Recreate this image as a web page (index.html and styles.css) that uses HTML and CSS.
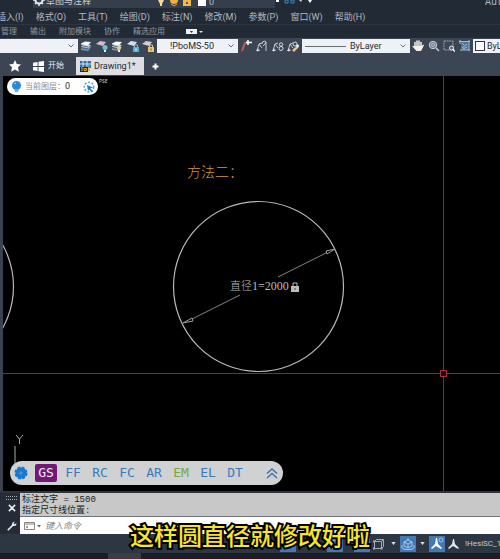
FILE: index.html
```html
<!DOCTYPE html>
<html lang="zh-CN">
<head>
<meta charset="utf-8">
<title>Drawing1</title>
<link rel="stylesheet" href="styles.css">
</head>
<body>
<svg class="defs" aria-hidden="true">
  <symbol id="layers" viewBox="0 0 12 12"><path d="M1 8l4-2 6 1-3 4-7-1z" fill="#7d93b1"/><path d="M1 6l4-2 6 1-3 3-7-1z" fill="#b9c9de"/><path d="M1 3.500l4-2 6 .5-3 3.500-7-1z" fill="#f4f7fb"/><path d="M1 7.800l7 1.200M1 5.800l7 1" stroke="#34404f" stroke-width=".6"/></symbol>
  <symbol id="sheet" viewBox="0 0 12 12"><path d="M0 4l4-3 6 1-3 4z"/></symbol>
  <symbol id="leader" viewBox="0 0 12 12"><path d="M1 11l2-7 3-1M3 4l3 4M1 11l3-1" fill="none" stroke="#c3cad4"/><path d="M0 11l2-3 1 3z" fill="#dfe4ea"/></symbol>
</svg>
<header class="app-head">
  <div class="quick">
    <div class="clip workspace"><svg class="gear" viewBox="0 0 12 12"><circle cx="6" cy="6" r="3.500" fill="none" stroke="#e8ebef" stroke-width="2"/><path d="M6 0v12M0 6h12M2 2l8 8M10 2l-8 8" stroke="#e8ebef" stroke-width="1.500" stroke-dasharray="2.500 7"/></svg><span>草图与注释</span></div>
    <div class="clip layer-state">
      <svg width="55" height="8" viewBox="0 0 55 8"><path d="M4 0h6L8 4v2H6V4z" fill="#f2dc9a"/><circle cx="20" cy="0" r="4" fill="#f1ac40"/><path d="M17 4l3 2 3-2" stroke="#f1ac40" fill="none"/><path d="M29 0h8v6h-8z" fill="#edb84e"/><path d="M32 2h2v2h-2z" fill="#70522c"/><path d="M44 0h8v6h-8z" fill="#fff"/></svg><span>0</span>
    </div>
    <svg class="quick-icons" viewBox="0 0 44 8"><path d="M1 0h3v2H1zM33 0h4l-2 3z" fill="#fff"/><path d="M10 0h3v3h-3zM16 0h3v3h-3z" fill="none" stroke="#388bc5"/><path d="M24 0h3l-1 2z" fill="#ccd2da"/></svg>
    <div class="clip app-name">Auto</div>
  </div>
  <nav class="menu">
    <a href="#">插入(I)</a><a href="#">格式(O)</a><a href="#">工具(T)</a><a href="#">绘图(D)</a><a href="#">标注(N)</a><a href="#">修改(M)</a><a href="#">参数(P)</a><a href="#">窗口(W)</a><a href="#">帮助(H)</a>
  </nav>
  <nav class="ribbon">
    <a href="#">管理</a><a href="#">输出</a><a href="#">附加模块</a><a href="#">协作</a><a href="#">精选应用</a>
    <button class="icon more" aria-label="功能区选项"><svg width="18" height="6" viewBox="0 0 18 6"><path d="M0 0h11v5H0z" fill="#eef1f5"/><path d="M4 2h3L5.500 4z" fill="#222a35"/><path d="M13 2h4l-2 2z" fill="#dfe4ea"/></svg></button>
  </nav>
</header>
<div class="toolbar">
  <span class="combo layer"><select aria-label="图层"><option></option></select><svg class="arrow" viewBox="0 0 6 4"><path d="M.5.5L3 3 5.500.5"/></svg></span>
  <div class="tools layer-tools">
    <button class="icon" aria-label="图层特性"><svg viewBox="0 0 12 12"><use href="#layers"/><path d="M6 10l2 1 3-5" stroke="#4d8ac8" fill="none"/></svg></button>
    <button class="icon" aria-label="关闭图层"><svg viewBox="0 0 12 12"><use href="#sheet" fill="#dab8cf"/><circle cx="9" cy="7.500" r="2.500" fill="#65c7d5"/><path d="M8 10h2v2H8z" fill="#dfeff3"/></svg></button>
    <button class="icon" aria-label="打开图层"><svg viewBox="0 0 12 12"><use href="#layers"/><circle cx="8" cy="8" r="2" fill="#ecd18b"/><path d="M7 10h2v2H7z" fill="#eee"/></svg></button>
    <button class="icon" aria-label="锁定图层"><svg viewBox="0 0 12 12"><use href="#sheet" fill="#d4dfed"/><path d="M6 7h6v5H6z" fill="#58afd2"/><path d="M7.500 7V5h3v2" fill="none" stroke="#78c2dd"/><path d="M8.500 8.500h1v2h-1z" fill="#fff"/></svg></button>
    <button class="icon" aria-label="解锁图层"><svg viewBox="0 0 12 12"><use href="#sheet" fill="#d8c9d8"/><path d="M6 7h6v5H6z" fill="#e9c46d"/><path d="M7.500 7V5h3v2" fill="none" stroke="#e9c46d"/><path d="M8.500 8.500h1v2h-1z" fill="#735929"/></svg></button>
  </div>
  <span class="combo style"><select aria-label="标注样式"><option>!PboMS-50</option></select><svg class="arrow" viewBox="0 0 6 4"><path d="M.5.5L3 3 5.500.5"/></svg></span>
  <div class="tools leader-tools">
    <button class="icon" aria-label="多重引线"><svg viewBox="0 0 12 12"><path d="M1 11l3-8 4-1" stroke="#c35d58" stroke-width="2" fill="none"/><path d="M7 0v5M5 2.500h6" stroke="#fff" stroke-width="1.500"/></svg></button>
    <button class="icon" aria-label="添加引线"><svg viewBox="0 0 12 12"><use href="#leader"/><path d="M6 4q0-3 3-3 2 1 0 3l-2 2M10 2v9" stroke="#c3cad4" fill="none"/></svg></button>
    <button class="icon" aria-label="对齐引线"><svg viewBox="0 0 12 12"><use href="#leader"/><circle cx="9" cy="4.500" r="1.700" fill="none" stroke="#d5dae1"/><circle cx="9" cy="8.500" r="2" fill="none" stroke="#d5dae1"/></svg></button>
    <button class="icon" aria-label="引线样式"><svg viewBox="0 0 12 12"><use href="#leader"/><circle cx="8" cy="4" r="2" fill="none" stroke="#d5dae1"/><path d="M5 10l5-4 1 2-4 4z" fill="#e8c58e"/><path d="M9 6l2-2 1 2-1 2z" fill="#fff"/></svg></button>
  </div>
  <span class="combo line"><i class="sample"></i><select aria-label="线型"><option>ByLayer</option></select><svg class="arrow" viewBox="0 0 6 4"><path d="M.5.5L3 3 5.500.5"/></svg></span>
  <div class="tools view-tools">
    <button class="icon" aria-label="平移"><svg viewBox="0 0 12 12"><path d="M3 7V2.500M5 6V1M7 6V1M9 7V2.500" stroke="#f5f2ea" stroke-width="1.500" stroke-linecap="round"/><path d="M2.300 6h7.500l1.200-1.500 1 .7L9 11H4.500L.3 6.500l.8-.8L3 7z" fill="#f5f2ea"/></svg></button>
    <button class="icon" aria-label="缩放"><svg viewBox="0 0 12 12"><circle cx="5" cy="5" r="3.700" fill="#738091" stroke="#c9cfd7"/><circle cx="5" cy="5" r="1.500" fill="none" stroke="#c9cfd7" stroke-width=".8"/><path d="M8 8l3 3" stroke="#c9cfd7" stroke-width="1.500"/></svg></button>
    <button class="icon" aria-label="窗口缩放"><svg viewBox="0 0 12 12"><path d="M1 1h9v9H1z" fill="none" stroke="#9da7b4" stroke-dasharray="2 .7"/><circle cx="8.500" cy="8" r="2" fill="#526071" stroke="#eef1f5"/><path d="M10 9.500l2 2" stroke="#fff" stroke-width="1.500"/></svg></button>
    <button class="icon" aria-label="范围缩放"><svg viewBox="0 0 12 12"><path d="M2 2h8v8H2z" fill="#497696"/><path d="M1 0v4M0 1.500h11M10 0v11M1 10h10M3 8l5-4M3 3l2 2M4 9l4-2" stroke="#a5bdd0" fill="none"/></svg></button>
  </div>
  <span class="combo color"><i class="swatch"></i><select aria-label="颜色"><option>ByLayer</option></select></span>
</div>
<div class="file-tabs">
  <button class="icon star" aria-label="收藏"><svg viewBox="0 0 12 12"><path d="M6 0l1.800 3.900 4.200.5L9 7.300l.8 4.400L6 9.500l-3.800 2.200L3 7.300 0 4.400l4.200-.5z" fill="#fff"/></svg></button>
  <button class="start"><svg viewBox="0 0 12 12" width="11" height="11"><path d="M0 2l5-1v4.500H0zM6 .8L12 0v5.500H6zM0 6.500h5V11l-5-1zM6 6.500h6V12l-6-.9z" fill="#fff"/></svg>开始</button>
  <button class="file"><svg viewBox="0 0 12 12" width="12" height="12"><path d="M0 1h11v7H0z" fill="#2d70a8"/><path d="M3 0v8M7 0v8M0 4h11" stroke="#d8e4ee"/><path d="M0 7h8v5H0z" fill="#172b42"/><path d="M1 8l1-.5V11M4 8.500h2.500v2H4zM9 5v6M8 9l2 2" stroke="#dfa632" fill="none"/></svg>Drawing1*</button>
  <button class="icon plus" aria-label="新建"><svg viewBox="0 0 7 7"><path d="M3.500.5v6M.5 3.500h6" stroke="#fff" stroke-width="2"/></svg></button>
</div>
<main class="canvas">
  <svg class="drawing" width="497" height="415" viewBox="3 76 497 415">
    <g fill="none" stroke="#b9b9b9" stroke-width="1.200">
      <circle cx="258.500" cy="286.500" r="85"/>
      <circle cx="-71.500" cy="286.500" r="85"/>
    </g>
    <g fill="none" stroke="#858585">
      <path d="M278 277l48-24M240 295l-48 24"/>
      <path d="M335 249l-9 2 1 3zM183 323l9-5 1 3z" stroke="#a0a0a0"/>
      <path d="M15 446v37M16 435l3.500 4 3.500-4M19.500 439v5" stroke="#aaa"/>
    </g>
    <path d="M443.500 76v415M3 373.500h497" stroke="#9c1f26"/>
    <path d="M440.500 370.500h6v6h-6z" fill="#250307" stroke="#a8393f"/>
    <text class="heading" x="187" y="177">方法二：</text>
    <text class="dimension" x="230" y="290">直径<tspan class="num">1=2000</tspan></text>
    <path d="M291 286h8v6h-8z" fill="#bcbcbc"/><path d="M293 286v-3h4v3" fill="none" stroke="#bcbcbc"/><path d="M294.500 288h1v2h-1z" fill="#444"/>
    <text class="pse" x="99" y="83">PSE</text>
  </svg>
  <div class="layer-pill"><svg width="11" height="12" viewBox="0 0 11 12"><circle cx="5.500" cy="4.500" r="4.500" fill="#2388df"/><path d="M3 8h5l-1 3H4z" fill="#65afe9"/><path d="M3 3l2-1" stroke="#a8d7ff"/></svg><span>当前图层：<b>0</b></span><button class="icon pick" aria-label="拾取"><svg viewBox="0 0 12 12"><circle cx="6" cy="6" r="4.800" fill="none" stroke="#4898d8" stroke-width="1.300" stroke-dasharray="2 1.500"/><path d="M4 4l6 2.500-2.500 1 2.500 3-1 1-2.700-3L5 10z" fill="#217fc9"/></svg></button></div>
  <div class="dock">
    <button class="icon settings" aria-label="设置"><svg viewBox="0 0 14 14"><circle cx="7" cy="7" r="5.500" fill="#1877ce"/><circle cx="7" cy="7" r="5.700" fill="none" stroke="#1877ce" stroke-width="1.600" stroke-dasharray="3 1.480"/><circle cx="7" cy="7" r="1.800" fill="#4492d8"/></svg></button>
    <button class="active">GS</button><button>FF</button><button>RC</button><button>FC</button><button>AR</button><button class="green">EM</button><button>EL</button><button>DT</button>
    <button class="icon fold" aria-label="收起"><svg viewBox="0 0 12 12"><path d="M1 6.500L6 2l5 4.500M1 11l5-4.500L11 11" fill="none" stroke="#4475ad" stroke-width="1.600"/></svg></button>
  </div>
</main>
<section class="command">
  <div class="command-side"><svg width="12" height="4" viewBox="0 0 12 4"><path d="M0 .5h12M0 3.500h12" stroke="#a2a9b3" stroke-dasharray="1 1"/></svg>
    <button class="icon" aria-label="关闭"><svg viewBox="0 0 8 8"><path d="M1.500 1.500l5 5m0-5l-5 5" stroke="#e9ecef" stroke-width="1.300"/></svg></button>
    <button class="icon wrench" aria-label="自定义"><svg viewBox="0 0 12 12"><path d="M1.500 10.500l6-6" stroke="#f2f2f2" stroke-width="2" stroke-linecap="round"/><path d="M9.500 1L7.700 2.800l1.500 1.500L11 2.500Q12 6 8.500 6T6 3.500Q6.300.8 9.500 1z" fill="#f2f2f2"/></svg></button></div>
  <div class="command-main">
    <div class="history"><p>标注文字 = 1500</p><p>指定尺寸线位置:</p></div>
    <div class="entry"><svg width="17" height="10" viewBox="0 0 17 10"><path d="M.5 1.500h10v7H.5zM.5 3h10M2 5l2 1-2 1" fill="none" stroke="#868686"/><path d="M13 4h4l-2 2.500z" fill="#666"/></svg><input aria-label="命令" placeholder="键入命令"></div>
  </div>
</section>
<footer class="status">
  <button class="icon on" aria-label="栅格"><svg viewBox="0 0 16 16"><path d="M3 11h10M8 4v8" stroke="#c6ddf2"/></svg></button>
  <button class="icon on second" aria-label="捕捉"><svg viewBox="0 0 16 16"><path d="M3 4h9v8H3z" fill="none" stroke="#c6ddf2"/></svg></button>
  <button class="icon on third" aria-label="选择循环"><svg viewBox="0 0 16 16"><path d="M3 4h8v6H3z" fill="none" stroke="#9ec1e4"/><path d="M11 8v5h3z" fill="#fff"/></svg></button>
  <button class="icon" aria-label="三维对象捕捉"><svg viewBox="0 0 16 16"><path d="M3.500 5.500h7v7h-7zM3.500 5.500l2-2h7v7l-2 2M10.500 5.500l2-2" fill="none" stroke="#a4adba"/><path d="M2 4.500h2v2H2zM2 11.500h2v2H2zM9.500 11.500h2v2h-2z" fill="#a4adba"/></svg></button>
  <svg class="caret" viewBox="0 0 6 4"><path d="M0 0h6L3 4z"/></svg>
  <button class="icon on" aria-label="动态坐标"><svg viewBox="0 0 16 16"><path d="M4 6l4-2 4 2v4l-4 2-4-2zM4 6l4 2 4-2M8 8v4M2 9v3l3 1.500h6l3-1.500V9M8 2v2" fill="none" stroke="#a5caed"/></svg></button>
  <svg class="caret" viewBox="0 0 6 4"><path d="M0 0h6L3 4z"/></svg>
  <button class="icon on" aria-label="注释可见性"><svg viewBox="0 0 16 16"><path d="M7 2h1l1 6 4 4-1 1-5-3-4 3-1-1 4-4z" fill="#fff"/><circle cx="12" cy="4" r="2" fill="none" stroke="#9dc6eb"/></svg></button>
  <button class="icon" aria-label="自动缩放"><svg viewBox="0 0 16 16"><path d="M7 3h1l1 5 4 4-1 1-5-3-4 3-1-1 4-4z" fill="#e2e5e9"/></svg></button>
  <button class="scale">!HesiSC_1</button>
</footer>
<div class="desk"><i></i></div>
<p class="caption">这样圆直径就修改好啦</p>
</body>
</html>
```
FILE: styles.css
```css
* { box-sizing: border-box; }
body {
  margin: 0;
  height: 100vh;
  overflow: hidden;
  position: relative;
  display: flex;
  flex-direction: column;
  background: #000;
  color: #b2b9c2;
  font: 9px/14px Roboto, "Noto Sans CJK SC", sans-serif;
}
button, input, select { font: inherit; color: inherit; }
button { border: 0; padding: 0; margin: 0; background: none; white-space: nowrap; }
a { color: inherit; text-decoration: none; white-space: nowrap; }
p { margin: 0; }
svg { display: block; flex: none; }
.defs { position: absolute; width: 0; height: 0; }
.icon { width: 12px; height: 12px; flex: none; }
.icon svg { width: 100%; height: 100%; }
.more { width: 18px; height: 6px; }

.app-head { background: #222a35; flex: none; }
.quick { height: 8px; display: flex; align-items: flex-end; overflow: hidden; padding-left: 33px; }
.clip { height: 8px; display: flex; align-items: flex-end; overflow: hidden; line-height: 10px; }
.workspace { width: 121px; background: #343e4c; gap: 1px; color: #cbd0d6; padding-bottom: 2px; }
.gear { width: 12px; height: 12px; }
.layer-state { width: 121px; background: #343e4c; }
.layer-state span { padding-bottom: 1px; }
.quick-icons { width: 44px; height: 8px; }
.app-name { margin-left: auto; width: 15px; font: 10px/10px "Liberation Mono", monospace; }
.menu { display: flex; gap: 12px; height: 17px; align-items: center; border-bottom: 1px solid #2c3541; padding-top: 1px; margin-left: -3px; }
.ribbon { display: flex; gap: 13px; height: 13px; align-items: center; padding-left: 1px; font-size: 8px; line-height: 12px; color: #8f98a4; }
.more { margin-left: 8px; }

.toolbar { flex: none; height: 16px; display: flex; align-items: center; background: #3b4553; overflow: hidden; }
.combo { height: 14px; display: flex; align-items: center; background: #eef1f6; color: #272b31; flex: none; padding-right: 4px; }
.combo select { appearance: none; border: 0; background: none; padding: 0; margin: 0; flex: 1; min-width: 0; height: 14px; }
.arrow { width: 6px; height: 4px; fill: none; stroke: #6c7179; }
.layer { width: 78px; }
.style { width: 81px; padding-left: 13px; }
.line { width: 108px; padding-left: 3px; gap: 4px; }
.sample { width: 41px; border-top: 1px solid #686c72; }
.combo.color { flex: 1; min-width: 0; padding: 0 0 0 2px; gap: 2px; }
.swatch { width: 10px; height: 10px; flex: none; border: 1px solid #33373c; background: #fff; }
.tools { display: flex; justify-content: space-between; flex: none; }
.layer-tools { width: 79px; padding: 0 3px 0 2px; }
.leader-tools { width: 64px; padding: 0 3px; }
.view-tools { width: 63px; padding: 0 2px; }

.file-tabs { flex: none; height: 22px; display: flex; align-items: center; background: #3b4553; color: #e9ecef; padding: 3px 0 1px 9px; }
.start { display: flex; align-items: center; gap: 4px; margin-left: 12px; font-size: 8px; }
.file { display: flex; align-items: center; gap: 2px; height: 18px; width: 68px; padding-left: 4px; margin-left: 12px; background: #dddde2; color: #242a32; }
.plus { width: 7px; height: 7px; margin-left: 8px; }

.canvas { flex: 1; min-height: 0; position: relative; overflow: hidden; border-left: 3px solid #3b424b; }
.heading { font: 14px "Noto Sans CJK SC", sans-serif; fill: #d0954a; font-weight: 300; }
.dimension { font: 11px "Noto Sans CJK SC", sans-serif; fill: #b8b8b8; font-weight: 300; }
.num { font: 12px "Liberation Serif", serif; }
.pse { font: 5px "Open Sans", sans-serif; fill: #ddd; }
.layer-pill { position: absolute; left: 4px; top: 2px; width: 91px; height: 17px; border-radius: 9px; background: #fff; display: flex; align-items: center; padding: 0 3px 0 4px; gap: 3px; color: #8a8a8a; font-size: 8px; }
.layer-pill b { font-weight: 400; color: #333; font-size: 9px; }
.pick { margin-left: auto; }
.dock { position: absolute; left: 7px; bottom: 6px; width: 273px; height: 24px; border-radius: 12px; background: #d0d1d3; color: #397bbd; display: flex; align-items: center; padding: 0 5px 0 4px; gap: 5px; font: 13px/16px "DejaVu Sans Mono", monospace; }
.dock button:not(.icon) { width: 22px; height: 18px; }
.dock .active { background: #751777; color: #eee; border-radius: 2px; }
.dock .green { color: #76a844; }
.settings { width: 14px; height: 14px; margin-right: 2px; }
.fold { margin-left: auto; }

.command { flex: none; height: 43px; display: flex; border-top: 2px solid #30353d; }
.command-side { width: 20px; background: #252c37; display: flex; flex-direction: column; align-items: center; padding: 3px 0 3px 3px; gap: 3px; }
.command-side .wrench { margin-top: auto; }
.command-side .icon { width: 10px; height: 10px; }
.command-main { flex: 1; min-width: 0; display: flex; flex-direction: column; }
.history { height: 24px; background: #c8c8c8; border-bottom: 1px solid #70757c; padding: 2px 2px 0; color: #1e1e1e; font: 9px/11px "Liberation Mono", "Noto Sans CJK SC", monospace; }
.entry { flex: 1; background: #fff; display: flex; align-items: center; gap: 4px; padding-left: 4px; }
.entry input { flex: 1; min-width: 0; height: 14px; border: 0; padding: 0; background: none; font-style: italic; }
.entry input::placeholder { color: #888; }

.status { flex: none; height: 19px; display: flex; align-items: center; justify-content: flex-end; background: #2d3643; gap: 1px; color: #c5cad0; overflow: hidden; font-size: 8px; }
.status .icon { width: 16px; height: 16px; }
.status .on { background: #4579b4; }
.second { margin-left: 30px; }
.third { margin-left: 10px; }
.caret { width: 5px; height: 3px; margin: 0 3px; fill: #dbe0e6; }
.scale { width: 35px; margin-left: 2px; text-align: left; }
.desk { flex: none; height: 6px; background: #191d25; padding-left: 108px; }
.desk i { display: block; width: 33px; height: 6px; background: #393d46; }
.caption { position: absolute; left: 0; right: 0; bottom: 6px; text-align: center; font: 500 24px/36px "Noto Sans CJK SC", sans-serif; color: #f7e52d; -webkit-text-stroke: 4px #000; paint-order: stroke fill; pointer-events: none; }
```
